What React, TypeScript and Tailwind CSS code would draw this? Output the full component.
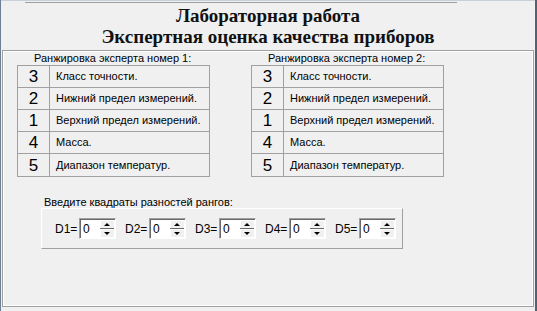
import React from "react";

const rows1 = [
  { n: "3", name: "Класс точности." },
  { n: "2", name: "Нижний предел измерений." },
  { n: "1", name: "Верхний предел измерений." },
  { n: "4", name: "Масса." },
  { n: "5", name: "Диапазон температур." },
];

const rows2 = [
  { n: "3", name: "Класс точности." },
  { n: "2", name: "Нижний предел измерений." },
  { n: "1", name: "Верхний предел измерений." },
  { n: "4", name: "Масса." },
  { n: "5", name: "Диапазон температур." },
];

function Ranking({ title, rows }: { title: string; rows: { n: string; name: string }[] }) {
  return (
    <div className="flex w-[193px] flex-col">
      <div className="h-[13px] pl-[17px] text-[11px] leading-[13px] whitespace-nowrap">{title}</div>
      <div className="border border-[#a0a0a0]">
        {rows.map((r, i) => (
          <div
            key={i}
            className={`flex h-[22px] ${i < rows.length - 1 ? "border-b border-[#a0a0a0]" : ""}`}
          >
            <div className="flex w-[32px] items-center justify-center border-r border-[#a0a0a0] text-[17px] leading-none">
              {r.n}
            </div>
            <div className="flex flex-1 items-center pl-[6px] text-[11px] whitespace-nowrap">{r.name}</div>
          </div>
        ))}
      </div>
    </div>
  );
}

function Spin({ label }: { label: string }) {
  return (
    <div className="flex items-center">
      <span className="w-[24px] text-[12px] leading-none whitespace-nowrap">{label}</span>
      <div className="flex h-[21px] w-[37px] border border-t-[#a0a0a0] border-l-[#a0a0a0] border-b-white border-r-white bg-white shadow-[inset_1px_1px_0_#696969]">
        <span className="flex-1 pl-[3px] pt-[1px] text-[12px] leading-[18px]">0</span>
        <div className="flex w-[15px] flex-col py-[1px] pr-[1px]">
          <div className="flex flex-1 items-center justify-center border-b border-[#696969] bg-[#f0f0f0] shadow-[inset_1px_1px_0_#fff]">
            <div className="h-0 w-0 border-x-[3px] border-b-[3px] border-x-transparent border-b-black" />
          </div>
          <div className="flex flex-1 items-center justify-center bg-[#f0f0f0] shadow-[inset_1px_1px_0_#fff]">
            <div className="h-0 w-0 border-x-[3px] border-t-[3px] border-x-transparent border-t-black" />
          </div>
        </div>
      </div>
    </div>
  );
}

export default function App() {
  return (
    <div
      className="flex h-[311px] w-[537px] flex-col border-l border-r-2 border-l-[#6e8096] border-r-[#506274] bg-[#f0f0f0] text-black"
      style={{ fontFamily: '"Liberation Sans", Arial, sans-serif' }}
    >
      <div className="h-px bg-[#c9d0dc]" />
      <div className="ml-[24px] mt-px h-px w-[432px] bg-[#a0a0a0]" />
      <div
        className="flex h-[47px] flex-col items-center pt-[2px] text-[19px] font-bold leading-[21px] text-[#111]"
        style={{ fontFamily: '"Liberation Serif", "Times New Roman", serif' }}
      >
        <div>Лабораторная работа</div>
        <div>Экспертная оценка качества приборов</div>
      </div>
      <div className="mx-px mb-[4px] flex flex-1 flex-col border border-[#a0a0a0] pt-px shadow-[inset_1px_1px_0_#fff,inset_-1px_-1px_0_#fff]">
        <div className="flex gap-[41px] pl-[14px]">
          <Ranking title="Ранжировка эксперта номер 1:" rows={rows1} />
          <Ranking title="Ранжировка эксперта номер 2:" rows={rows2} />
        </div>
        <div className="ml-[41px] mt-[19px] h-[12px] text-[11px] leading-[13px]">
          Введите квадраты разностей рангов:
        </div>
        <div className="ml-[38px] flex h-[41px] w-[362px] items-center gap-[9px] border border-t-white border-l-white border-b-[#a0a0a0] border-r-[#a0a0a0] pl-[13px]">
          <Spin label="D1=" />
          <Spin label="D2=" />
          <Spin label="D3=" />
          <Spin label="D4=" />
          <Spin label="D5=" />
        </div>
      </div>
    </div>
  );
}
